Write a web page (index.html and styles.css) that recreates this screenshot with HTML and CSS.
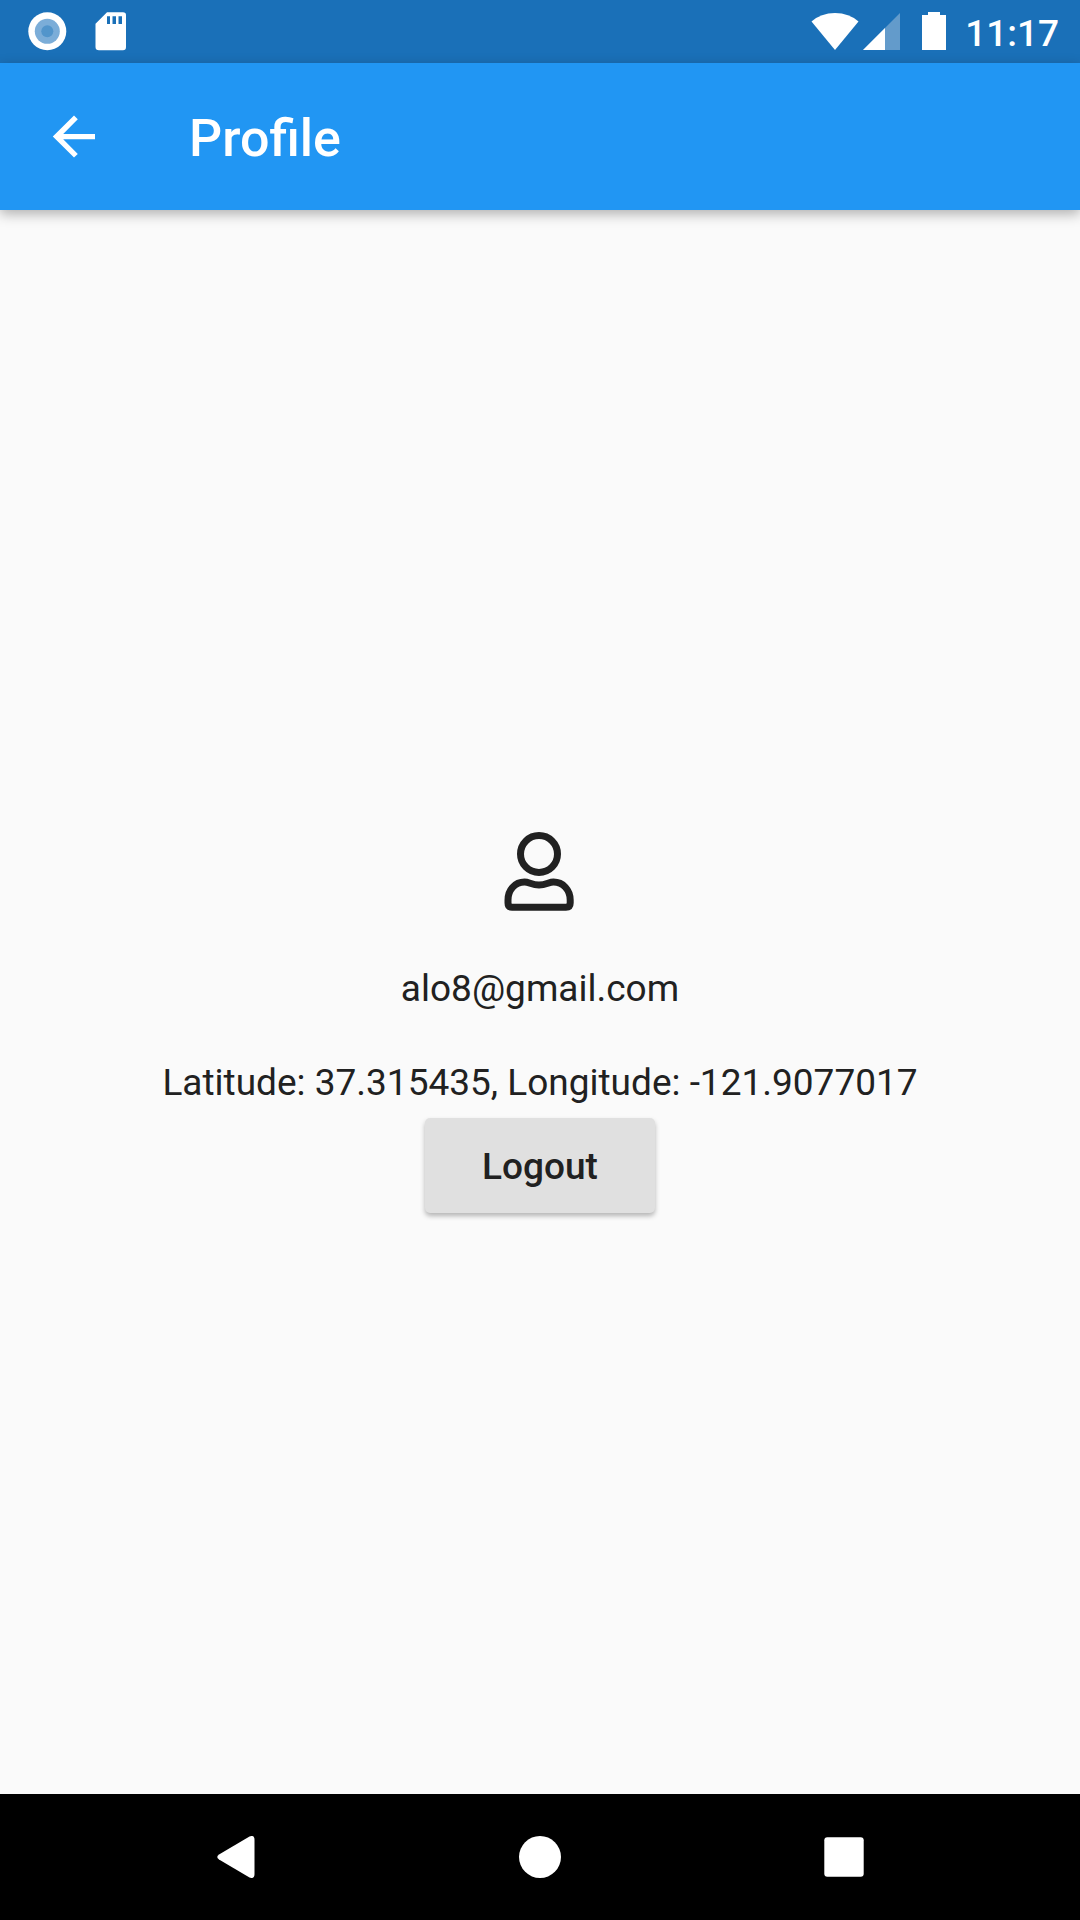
FILE: index.html
```html
<!DOCTYPE html>
<html lang="en">
<head>
  <meta charset="utf-8">
  <meta name="viewport" content="width=device-width, initial-scale=1">
  <title>Profile</title>
  <link rel="stylesheet" href="styles.css">
</head>
<body>
  <div class="status-bar">
    <div class="status-group notifications">
      <svg width="40" height="40" viewBox="0 0 40 40" aria-hidden="true">
        <circle cx="20.300" cy="20.300" r="19" fill="#fff"/>
        <circle cx="20.300" cy="20.300" r="12.500" fill="#7badd8"/>
        <circle cx="20.300" cy="20.300" r="6" fill="#5295cb"/>
      </svg>
      <svg width="32" height="40" viewBox="0 0 32 40" aria-hidden="true">
        <path fill="#fff" fill-rule="evenodd" d="M12 1.300H28Q31 1.300 31 4V36Q31 39.300 28 39.300H4Q.5 39.300 .5 36V12.800ZM12 5.300V13H15V5.300ZM17.500 5.300V13H21V5.300ZM23.500 5.300V13H27V5.300Z"/>
      </svg>
    </div>
    <div class="status-group system">
      <svg width="48" height="40" viewBox="0 0 48 40" aria-hidden="true">
        <path fill="#fff" d="M24 39L.5 10.500Q10 2 24 2T47.500 10.500Z"/>
      </svg>
      <svg width="40" height="40" viewBox="0 0 40 40" aria-hidden="true">
        <path fill="#639bcb" d="M1 39L38 2V39Z"/>
        <path fill="#fff" d="M1 39L23 17V39Z"/>
      </svg>
      <svg class="battery" width="24" height="40" viewBox="0 0 24 40" aria-hidden="true">
        <path fill="#fff" d="M6 1H18V4H24V39H0V4H6Z"/>
      </svg>
      <time class="clock">11:17</time>
    </div>
  </div>

  <header class="app-bar">
    <button class="icon-button" type="button" aria-label="Back">
      <svg width="44" height="44" viewBox="0 0 44 44" aria-hidden="true">
        <path fill="#fff" d="M43 19V24.200H11.200L25.800 38.900L22 42.600L.8 21.600L22 .6L25.800 4.300L11.200 19Z"/>
      </svg>
    </button>
    <h1 class="title">Profile</h1>
  </header>

  <main class="profile">
    <svg class="avatar" width="72" height="80" viewBox="0 0 72 80" fill="none" stroke="#212121" stroke-width="7" aria-hidden="true">
      <circle cx="35" cy="22" r="18.500"/>
      <path stroke-linejoin="round" d="M4 71V68C4 58 11 50 20.500 50C25 50 28 53 35 53S45 50 49.500 50C59 50 66.200 58 66.200 68V71Q66.200 75.200 62 75.200H8Q4 75.200 4 71Z"/>
    </svg>
    <p class="detail email">alo8@gmail.com</p>
    <p class="detail location">Latitude: 37.315435, Longitude: -121.9077017</p>
    <button class="logout" type="button">Logout</button>
  </main>

  <nav class="nav-bar" aria-label="System">
    <button class="nav-button" type="button" aria-label="Back">
      <svg width="42" height="42" viewBox="0 0 42 42" aria-hidden="true">
        <path fill="#fff" d="M34.500 .5Q39.500-1.500 39.500 4V38Q39.500 43.500 34.500 41.500L4 23.500Q.5 21 4 18.500Z"/>
      </svg>
    </button>
    <button class="nav-button" type="button" aria-label="Home">
      <svg width="42" height="42" viewBox="0 0 42 42" aria-hidden="true">
        <circle cx="21" cy="21" r="21" fill="#fff"/>
      </svg>
    </button>
    <button class="nav-button" type="button" aria-label="Recent apps">
      <svg width="42" height="42" viewBox="0 0 42 42" aria-hidden="true">
        <rect x="1.300" y="1.300" width="39.400" height="39.400" rx="3" fill="#fff"/>
      </svg>
    </button>
  </nav>
</body>
</html>
```
FILE: styles.css
```css
* {
  box-sizing: border-box;
}

body {
  display: flex;
  flex-direction: column;
  min-height: 100vh;
  margin: 0;
  background: #fafafa;
  color: #212121;
  font-family: Roboto, sans-serif;
  font-size: 37px;
  line-height: 43px;
}

svg {
  display: block;
  flex: none;
}

button {
  border: 0;
  color: inherit;
  font: inherit;
  cursor: pointer;
}

.status-bar {
  display: flex;
  align-items: center;
  justify-content: space-between;
  height: 63px;
  padding: 0 21px 1px 27px;
  background: #1a70b8;
  color: #fff;
}

.status-group {
  display: flex;
  align-items: center;
}

.notifications {
  gap: 28px;
}

.system {
  gap: 3px;
}

.battery {
  margin: 0 16px 0 17px;
}

.clock {
  padding-top: 4px;
  font-weight: 500;
}

.app-bar {
  display: flex;
  align-items: center;
  gap: 42px;
  height: 147px;
  background: #2196f3;
  color: #fff;
  box-shadow: 0 4px 12px rgba(0, 0, 0, 0.3);
}

.icon-button {
  display: flex;
  align-items: center;
  justify-content: center;
  width: 147px;
  height: 147px;
  padding: 0;
  background: none;
}

.title {
  margin: 0;
  padding-top: 4px;
  font-size: 52px;
  font-weight: 500;
  line-height: 62px;
}

.profile {
  display: flex;
  flex: 1;
  flex-direction: column;
  align-items: center;
  justify-content: center;
  padding: 40px 0 0;
}

.detail {
  margin: 0;
  text-align: center;
}

.email {
  margin-top: 55px;
}

.location {
  margin-top: 51px;
}

.logout {
  height: 95px;
  margin-top: 14px;
  padding: 2px 57px 0;
  border-radius: 5px;
  background: #e0e0e0;
  font-weight: 500;
  box-shadow: 0 3px 5px rgba(0, 0, 0, 0.28);
}

.nav-bar {
  display: flex;
  height: 126px;
  padding: 0 84px;
  background: #000;
}

.nav-button {
  display: flex;
  flex: 1;
  align-items: center;
  justify-content: center;
  padding: 0;
  background: none;
}
```
